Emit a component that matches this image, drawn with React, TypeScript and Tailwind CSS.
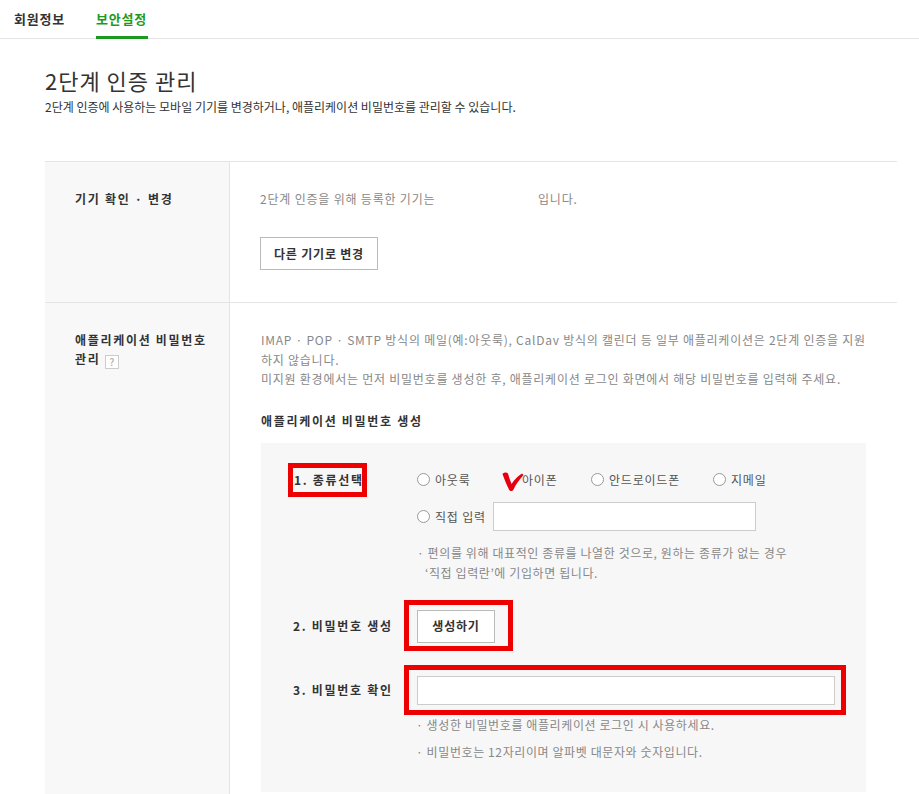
import React from "react";

const F = { fontFamily: '"Noto Sans CJK KR", "Noto Sans", sans-serif' };

function Radio({ hidden }: { hidden?: boolean }) {
  return (
    <span
      className={`inline-block w-[13px] h-[13px] rounded-full border shrink-0 ${hidden ? "border-transparent bg-transparent" : "border-[#999] bg-white"}`}
    />
  );
}

function Opt({ label, w, checked }: { label: string; w: string; checked?: boolean }) {
  return (
    <div className={`relative flex items-center gap-[5px] ${w}`}>
      <Radio hidden={checked} />
      <span className="text-[12px] text-[#555] tracking-[0.8px]">{label}</span>
      {checked && (
        <svg className="absolute left-[-3px] top-[0px]" width="24" height="22" viewBox="0 0 24 22">
          <path d="M1.5 3 C3 1.2 5.5 1 7 2.5 C8 6 9 9.5 10.5 13 C13.5 8.5 17 5 21 2.5 L22.5 4 C18.5 8.5 15 13 12.5 18.5 C11.5 20.5 9 20.5 8 18.5 C5.5 13.5 3.5 8.5 1.5 3 Z" fill="#e5000f" />
        </svg>
      )}
    </div>
  );
}

const label = "font-bold text-[#333] tracking-[1.7px]";

export default function App() {
  return (
    <div style={F} className="w-[919px] h-[794px] overflow-hidden bg-white text-[#333]">
      {/* tabs */}
      <div className="h-[39px] border-b border-[#e5e5e5] flex pl-[14px] gap-[31px]">
        <div className="pt-[9px] text-[13px] font-bold text-[#333] leading-[20px] tracking-[0.8px]">회원정보</div>
        <div className="pt-[9px] text-[13px] font-bold text-[#1d9a1d] leading-[20px] tracking-[0.8px] border-b-[3px] border-[#1d9a1d] h-[39px] w-[52px]">보안설정</div>
      </div>

      <div className="pl-[45px] pr-[22px]">
        <h1 className="mt-[27px] text-[22px] leading-[28px] text-[#333] font-normal tracking-[1px]">2단계 인증 관리</h1>
        <p className="mt-[4px] text-[12px] leading-[18px] text-[#333]">
          2단계 인증에 사용하는 모바일 기기를 변경하거나, 애플리케이션 비밀번호를 관리할 수 있습니다.
        </p>

        <div className="mt-[45px] border-t border-[#e5e5e5]">
          {/* row 1 */}
          <div className="flex border-b border-[#e5e5e5]">
            <div className="w-[185px] shrink-0 bg-[#f8f8f8] border-r border-[#e5e5e5] pl-[30px] pt-[28px]">
              <div className={`text-[12px] leading-[18px] ${label}`}>기기 확인 · 변경</div>
            </div>
            <div className="flex-1 pl-[30px] pt-[28px] pb-[32px]">
              <div className="text-[12px] leading-[18px] text-[#888] flex tracking-[0.8px]">
                <span className="w-[278px]">2단계 인증을 위해 등록한 기기는</span>
                <span>입니다.</span>
              </div>
              <button className="mt-[29px] h-[33px] w-[118px] border border-[#bbb] bg-white text-[12px] font-bold text-[#333] tracking-[0.8px]">
                다른 기기로 변경
              </button>
            </div>
          </div>

          {/* row 2 */}
          <div className="flex">
            <div className="w-[185px] shrink-0 bg-[#f8f8f8] border-r border-[#e5e5e5] pl-[30px] pt-[27px] h-[500px]">
              <div className={`text-[12px] leading-[19px] ${label}`}>
                애플리케이션 비밀번호
                <br />
                관리{" "}
                <span className="inline-flex items-center justify-center w-[14px] h-[14px] border border-[#ccc] bg-white text-[10px] font-normal text-[#999] align-[-2px] tracking-normal">?</span>
              </div>
            </div>
            <div className="w-[636px] pl-[31px] pt-[27px]">
              <div className="text-[12px] leading-[19.5px] text-[#888] tracking-[0.75px] whitespace-nowrap">
                IMAP · POP · SMTP 방식의 메일(예:아웃룩), CalDav 방식의 캘린더 등 일부 애플리케이션은 2단계 인증을 지원
                <br />
                하지 않습니다.
                <br />
                미지원 환경에서는 먼저 비밀번호를 생성한 후, 애플리케이션 로그인 화면에서 해당 비밀번호를 입력해 주세요.
              </div>
              <div className={`mt-[22px] text-[12px] leading-[20px] ${label}`}>애플리케이션 비밀번호 생성</div>

              <div className="mt-[12px] w-[605px] bg-[#f7f7f7] pt-[27px] pb-[30px] text-[12px]">
                {/* row 1 */}
                <div className="flex">
                  <div className="w-[156px] shrink-0 pl-[33px] pt-[1px]">
                    <span className={`relative inline-block leading-[18px] ${label}`}>
                      1. 종류선택
                      <span className="absolute left-[-6px] right-[-3px] top-[-8px] bottom-[-8px] border-[5px] border-[#ee0000]" />
                    </span>
                  </div>
                  <div>
                    <div className="flex items-center h-[20px]">
                      <Opt label="아웃룩" w="w-[87px]" />
                      <Opt label="아이폰" w="w-[87px]" checked />
                      <Opt label="안드로이드폰" w="w-[122px]" />
                      <Opt label="지메일" w="w-[80px]" />
                    </div>
                    <div className="flex items-center mt-[13px] h-[28px]">
                      <Radio />
                      <span className="ml-[5px] text-[#555] w-[58px] tracking-[0.8px]">직접 입력</span>
                      <div className="w-[263px] h-[29px] border border-[#ccc] bg-white" />
                    </div>
                    <div className="mt-[12px] text-[#888] leading-[20px] tracking-[0.6px] whitespace-nowrap">
                      · 편의를 위해 대표적인 종류를 나열한 것으로, 원하는 종류가 없는 경우
                      <br />
                      <span className="pl-[8px]">‘직접 입력란’에 기입하면 됩니다.</span>
                    </div>
                  </div>
                </div>

                {/* row 2 */}
                <div className="flex items-center mt-[27px]">
                  <div className={`w-[156px] shrink-0 pl-[32px] ${label}`}>2. 비밀번호 생성</div>
                  <div className="relative">
                    <button className="h-[33px] w-[78px] border border-[#bbb] bg-white font-bold text-[#333] tracking-[0.8px]">생성하기</button>
                    <span className="absolute left-[-13px] right-[-18px] top-[-10px] bottom-[-8px] border-[5px] border-[#ee0000]" />
                  </div>
                </div>

                {/* row 3 */}
                <div className="flex items-center mt-[33px]">
                  <div className={`w-[156px] shrink-0 pl-[32px] ${label}`}>3. 비밀번호 확인</div>
                  <div className="relative">
                    <div className="h-[29px] w-[418px] border border-[#ccc] bg-white" />
                    <span className="absolute left-[-13px] right-[-11px] top-[-11px] bottom-[-10px] border-[5px] border-[#ee0000]" />
                  </div>
                </div>
                <div className="pl-[155px] mt-[10px] text-[#888] leading-[20px] tracking-[0.6px]">
                  <div>· 생성한 비밀번호를 애플리케이션 로그인 시 사용하세요.</div>
                  <div className="mt-[7px]">· 비밀번호는 12자리이며 알파벳 대문자와 숫자입니다.</div>
                </div>
              </div>
            </div>
          </div>
        </div>
      </div>
    </div>
  );
}
